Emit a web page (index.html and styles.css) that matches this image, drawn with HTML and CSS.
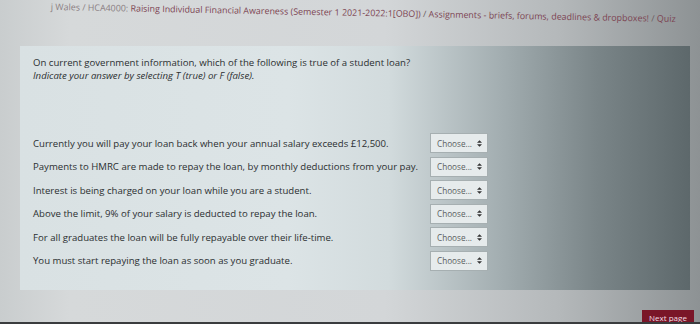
FILE: index.html
```html
<!DOCTYPE html>
<html>
<head>
<meta charset="utf-8">
<link rel="stylesheet" href="styles.css">
</head>
<body>
<div class="page">
  <nav class="crumbs">
    <span class="dim">j Wales / HCA4000: </span><a class="link">Raising Individual Financial Awareness (Semester 1 2021-2022:1[OBO])</a><span class="sep"> / </span><a class="link">Assignments - briefs, forums, deadlines &amp; dropboxes!</a><span class="sep"> / </span><a class="link">Quiz</a>
  </nav>
  <section class="panel">
    <div class="qtext">
      <p class="q">On current government information, which of the following is true of a student loan?</p>
      <p class="q italic">Indicate your answer by selecting T (true) or F (false).</p>
    </div>
    <div class="answers">
      <div class="row"><span class="stmt">Currently you will pay your loan back when your annual salary exceeds £12,500.</span><span class="select">Choose... <svg class="arr" viewBox="0 0 6 8" width="5" height="7"><path d="M3 0 L6 3 H0 Z M3 8 L6 5 H0 Z" fill="#333"/></svg></span></div>
      <div class="row"><span class="stmt">Payments to HMRC are made to repay the loan, by monthly deductions from your pay.</span><span class="select">Choose... <svg class="arr" viewBox="0 0 6 8" width="5" height="7"><path d="M3 0 L6 3 H0 Z M3 8 L6 5 H0 Z" fill="#333"/></svg></span></div>
      <div class="row"><span class="stmt">Interest is being charged on your loan while you are a student.</span><span class="select">Choose... <svg class="arr" viewBox="0 0 6 8" width="5" height="7"><path d="M3 0 L6 3 H0 Z M3 8 L6 5 H0 Z" fill="#333"/></svg></span></div>
      <div class="row"><span class="stmt">Above the limit, 9% of your salary is deducted to repay the loan.</span><span class="select">Choose... <svg class="arr" viewBox="0 0 6 8" width="5" height="7"><path d="M3 0 L6 3 H0 Z M3 8 L6 5 H0 Z" fill="#333"/></svg></span></div>
      <div class="row"><span class="stmt">For all graduates the loan will be fully repayable over their life-time.</span><span class="select">Choose... <svg class="arr" viewBox="0 0 6 8" width="5" height="7"><path d="M3 0 L6 3 H0 Z M3 8 L6 5 H0 Z" fill="#333"/></svg></span></div>
      <div class="row"><span class="stmt">You must start repaying the loan as soon as you graduate.</span><span class="select">Choose... <svg class="arr" viewBox="0 0 6 8" width="5" height="7"><path d="M3 0 L6 3 H0 Z M3 8 L6 5 H0 Z" fill="#333"/></svg></span></div>
    </div>
  </section>
  <div class="footer">
    <button class="next">Next page</button>
  </div>
</div>
</body>
</html>
```
FILE: styles.css
```css
html, body {
  margin: 0;
  padding: 0;
}
body {
  width: 700px;
  height: 324px;
  overflow: hidden;
  font-family: "Open Sans", "Liberation Sans", sans-serif;
  background: linear-gradient(to right, #c9cdce 0%, #d6d9da 10%, #d3d6d8 55%, #b4b8ba 80%, #8d9294 100%);
}
.page {
  height: 322px;
  display: flex;
  flex-direction: column;
  border-bottom: 2px solid #3a3c3e;
}
.crumbs {
  font-size: 8.9px;
  line-height: 12px;
  white-space: nowrap;
  padding: 0 0 0 51px;
  margin-top: 0;
  height: 28px;
  color: #6f6a6c;
  transform: rotate(1.1deg);
  transform-origin: 0 0;
}
.crumbs .link { color: #7c4452; }
.crumbs .dim { color: #8a7e82; }
.crumbs .sep { color: #6a5b60; }
.panel {
  margin: 18px 10px 0 20px;
  height: 244px;
  padding: 10px 0 0 13px;
  box-sizing: border-box;
  background: linear-gradient(to right, #d9e1e3 0%, #dce4e6 40%, #d2dbdd 55%, #a2adb0 72%, #7a8588 86%, #5d686b 100%);
  color: #2b2f31;
}
.q {
  margin: 0;
  font-size: 9.6px;
  line-height: 13px;
}
.italic { font-style: italic; }
.answers {
  margin-top: 51px;
  display: flex;
  flex-direction: column;
  gap: 3.6px;
}
.row {
  display: grid;
  grid-template-columns: 397px 58px;
  align-items: center;
  height: 20px;
}
.stmt {
  font-size: 9.6px;
  white-space: nowrap;
}
.select {
  box-sizing: border-box;
  height: 20px;
  border: 1px solid #a6afb1;
  background: #e6ebec;
  font-size: 8.2px;
  color: #5a5f62;
  display: flex;
  align-items: center;
  gap: 5px;
  padding-left: 6px;
}
.footer {
  flex: 1;
  display: flex;
  justify-content: flex-end;
  align-items: flex-end;
  padding-right: 6px;
}
.next {
  width: 52px;
  height: 12px;
  border: 0;
  padding: 2px 0 0;
  background: #7a1628;
  color: #f1dfe3;
  font-family: "Open Sans", "Liberation Sans", sans-serif;
  font-size: 8px;
  line-height: 12px;
  overflow: hidden;
  vertical-align: top;
}
```
